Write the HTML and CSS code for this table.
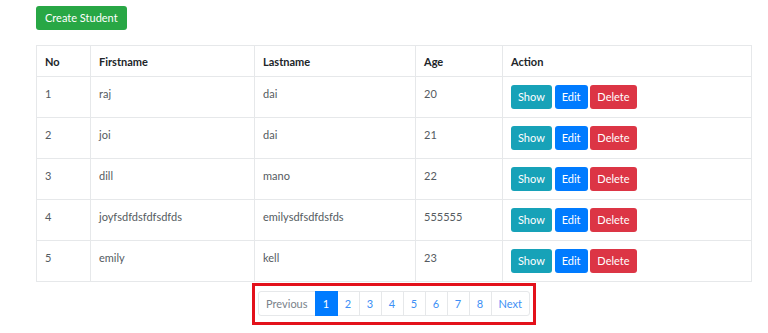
FILE: index.html
```html
<!DOCTYPE html>
<html lang="en">
<head>
  <meta charset="UTF-8" />
  <meta name="viewport" content="width=device-width, initial-scale=1.0" />
  <title>Students</title>
  <link rel="stylesheet" href="styles.css">
</head>
<body>
  <div class="container">
    <h2 class="page-title">Laravel Simple CRUD Example with Pagination</h2>

    <a href="#" class="btn btn-success create-btn">Create Student</a>

    <table class="table">
      <thead>
        <tr>
          <th class="col-no">No</th>
          <th class="col-first">Firstname</th>
          <th class="col-last">Lastname</th>
          <th class="col-age">Age</th>
          <th>Action</th>
        </tr>
      </thead>
      <tbody>
        <tr>
          <td>1</td>
          <td>raj</td>
          <td>dai</td>
          <td>20</td>
          <td>
            <a href="#" class="btn btn-info">Show</a>
            <a href="#" class="btn btn-primary">Edit</a>
            <button class="btn btn-danger">Delete</button>
          </td>
        </tr>
        <tr>
          <td>2</td>
          <td>joi</td>
          <td>dai</td>
          <td>21</td>
          <td>
            <a href="#" class="btn btn-info">Show</a>
            <a href="#" class="btn btn-primary">Edit</a>
            <button class="btn btn-danger">Delete</button>
          </td>
        </tr>
        <tr>
          <td>3</td>
          <td>dill</td>
          <td>mano</td>
          <td>22</td>
          <td>
            <a href="#" class="btn btn-info">Show</a>
            <a href="#" class="btn btn-primary">Edit</a>
            <button class="btn btn-danger">Delete</button>
          </td>
        </tr>
        <tr>
          <td>4</td>
          <td>joyfsdfdsfdfsdfds</td>
          <td>emilysdfsdfdsfds</td>
          <td>555555</td>
          <td>
            <a href="#" class="btn btn-info">Show</a>
            <a href="#" class="btn btn-primary">Edit</a>
            <button class="btn btn-danger">Delete</button>
          </td>
        </tr>
        <tr>
          <td>5</td>
          <td>emily</td>
          <td>kell</td>
          <td>23</td>
          <td>
            <a href="#" class="btn btn-info">Show</a>
            <a href="#" class="btn btn-primary">Edit</a>
            <button class="btn btn-danger">Delete</button>
          </td>
        </tr>
      </tbody>
    </table>

    <!-- Pagination (highlighted) -->
    <div class="pager-wrap">
      <div class="highlight">
        <ul class="pagination">
          <li class="page-item disabled"><span class="page-link">Previous</span></li>
          <li class="page-item active"><span class="page-link">1</span></li>
          <li class="page-item"><a class="page-link" href="#">2</a></li>
          <li class="page-item"><a class="page-link" href="#">3</a></li>
          <li class="page-item"><a class="page-link" href="#">4</a></li>
          <li class="page-item"><a class="page-link" href="#">5</a></li>
          <li class="page-item"><a class="page-link" href="#">6</a></li>
          <li class="page-item"><a class="page-link" href="#">7</a></li>
          <li class="page-item"><a class="page-link" href="#">8</a></li>
          <li class="page-item"><a class="page-link" href="#">Next</a></li>
        </ul>
      </div>
    </div>
  </div>
</body>
</html>
```

FILE: styles.css
```css
/* General Styling */
body,
html {
  margin: 0;
  padding: 0;
  background: #fff;
  font-family: Lato, "Liberation Sans", sans-serif;
  font-size: 11px;
  color: #212529;
  overflow: hidden;
}

.container {
  width: 716px;
  margin-left: 36px;
}

/* Title, mostly scrolled out of view */
.page-title {
  margin: -27px 0 0 0;
  height: 33px;
  line-height: 26px;
  font-size: 22px;
  font-weight: bold;
  text-align: center;
}

/* Buttons */
.btn {
  display: inline-block;
  height: 24px;
  line-height: 24px;
  padding: 0 7px;
  border: none;
  border-radius: 3px;
  color: #fff;
  font-family: inherit;
  font-size: 11px;
  text-decoration: none;
  vertical-align: top;
  cursor: pointer;
}

.btn-success { background-color: #28a745; }
.btn-info { background-color: #17a2b8; }
.btn-primary { background-color: #007bff; }
.btn-danger { background-color: #dc3545; }

.create-btn {
  padding: 0 9px;
}

/* Table */
.table {
  width: 100%;
  margin-top: 15px;
  border-collapse: collapse;
}

.table th,
.table td {
  border: 1px solid #e6e8ea;
  text-align: left;
  vertical-align: top;
  padding: 8px 8px;
  line-height: 15px;
}

.table th {
  font-weight: bold;
  padding: 8px 8px 7px;
}

.table td {
  color: #555b61;
  height: 24px;
  line-height: 17px;
}

.col-no { width: 37px; }
.col-first { width: 147px; }
.col-last { width: 144px; }
.col-age { width: 70px; }

/* Pagination */
.pager-wrap {
  display: flex;
  justify-content: center;
  margin-top: 1px;
}

.highlight {
  border: 3px solid #e3111b;
  padding: 5px 3px 6px;
}

.pagination {
  display: flex;
  list-style: none;
  margin: 0;
  padding: 0;
}

.page-link {
  display: block;
  height: 23px;
  line-height: 23px;
  padding: 0 7px;
  min-width: 7px;
  text-align: center;
  border: 1px solid #e6e8ea;
  margin-left: -1px;
  color: #3d8ff5;
  text-decoration: none;
}

.page-item:first-child .page-link {
  margin-left: 0;
  border-radius: 3px 0 0 3px;
}

.page-item:last-child .page-link {
  border-radius: 0 3px 3px 0;
}

.page-item.disabled .page-link {
  color: #7a828a;
}

.page-item.active .page-link {
  background-color: #007bff;
  border-color: #007bff;
  color: #fff;
  position: relative;
}
```
